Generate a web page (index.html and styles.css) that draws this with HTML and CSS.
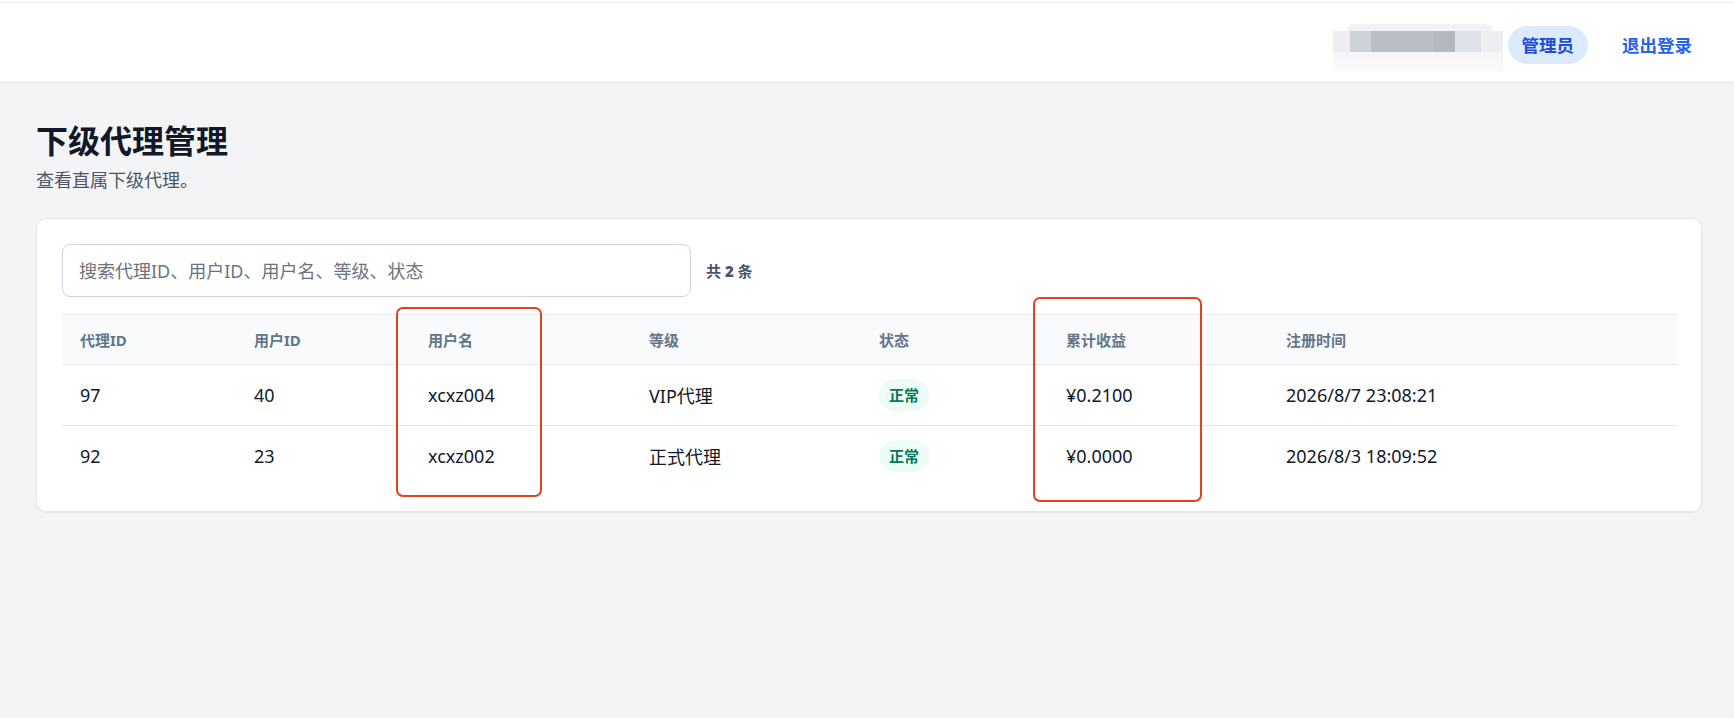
FILE: index.html
```html
<!DOCTYPE html>
<html lang="zh-CN">
<head>
    <meta charset="UTF-8">
    <meta name="viewport" content="width=device-width, initial-scale=1.0">
    <title>下级代理管理</title>
    <link rel="stylesheet" href="styles.css">
</head>
<body>
    <!-- Top bar -->
    <header class="topbar">
        <div class="user-blur">
            <div class="blur-top"></div>
            <div class="blur-mid">
                <span class="b1"></span><span class="b2"></span><span class="b3"></span><span class="b4"></span><span class="b5"></span>
            </div>
            <div class="blur-bottom"></div>
        </div>
        <span class="role-pill">管理员</span>
        <a class="logout" href="#">退出登录</a>
    </header>

    <main class="main">
        <h1 class="page-title">下级代理管理</h1>
        <p class="page-desc">查看直属下级代理。</p>

        <section class="card">
            <div class="toolbar">
                <input class="search" type="text" placeholder="搜索代理ID、用户ID、用户名、等级、状态">
                <span class="count">共 <b>2</b> 条</span>
            </div>

            <table class="agents">
                <colgroup>
                    <col class="c-agent">
                    <col class="c-user">
                    <col class="c-name">
                    <col class="c-level">
                    <col class="c-status">
                    <col class="c-income">
                    <col class="c-time">
                </colgroup>
                <thead>
                    <tr>
                        <th>代理ID</th>
                        <th>用户ID</th>
                        <th>用户名</th>
                        <th>等级</th>
                        <th>状态</th>
                        <th>累计收益</th>
                        <th>注册时间</th>
                    </tr>
                </thead>
                <tbody>
                    <tr>
                        <td>97</td>
                        <td>40</td>
                        <td>xcxz004</td>
                        <td>VIP代理</td>
                        <td><span class="badge">正常</span></td>
                        <td>¥0.2100</td>
                        <td>2026/8/7 23:08:21</td>
                    </tr>
                    <tr>
                        <td>92</td>
                        <td>23</td>
                        <td>xcxz002</td>
                        <td>正式代理</td>
                        <td><span class="badge">正常</span></td>
                        <td>¥0.0000</td>
                        <td>2026/8/3 18:09:52</td>
                    </tr>
                </tbody>
            </table>
        </section>
    </main>

    <!-- annotation marks drawn over the screenshot -->
    <div class="mark mark-name"></div>
    <div class="mark mark-income"></div>
</body>
</html>
```

FILE: styles.css
```css
html {
    background-color: #fff;
}

body {
    margin: 0;
    font-family: "Noto Sans", "Noto Sans CJK SC", sans-serif;
    color: #111827;
    position: relative;
}

/* Top bar */
.topbar {
    margin-top: 2px;
    height: 79px;
    border-top: 1px solid #ececec;
    border-bottom: 1px solid #e5e7eb;
    background-color: #fff;
    display: flex;
    justify-content: flex-end;
    align-items: center;
    padding-right: 30px;
}

.user-blur {
    width: 170px;
    height: 48px;
    margin-top: 10px;
    margin-right: 5px;
    display: flex;
    flex-direction: column;
    filter: blur(0.6px);
}

.blur-top {
    height: 7px;
    margin: 0 10px 0 14px;
    background-color: #f0f2f5;
    border-radius: 8px 8px 0 0;
}

.blur-mid {
    height: 21px;
    display: flex;
    background-color: #eceef2;
}

.blur-mid span {
    display: block;
    height: 100%;
}

.blur-mid .b1 { width: 17px; background-color: #eceef2; }
.blur-mid .b2 { width: 21px; background-color: #cdd1d8; }
.blur-mid .b3 { width: 63px; background-color: #babfc7; }
.blur-mid .b4 { width: 21px; background-color: #b4b8c1; }
.blur-mid .b5 { width: 26px; background-color: #dfe2e8; }

.blur-bottom {
    height: 20px;
    background: linear-gradient(#f4f5f8, #fbfbfc);
}

.role-pill {
    background-color: #dbeafe;
    color: #1d4ed8;
    font-weight: 700;
    font-size: 17.5px;
    line-height: 24px;
    padding: 7px 14px;
    border-radius: 20px;
    margin-top: 4px;
}

.logout {
    color: #2563eb;
    font-weight: 700;
    font-size: 17.5px;
    line-height: 24px;
    padding: 7px 12px;
    margin-left: 22px;
    margin-top: 4px;
    text-decoration: none;
}

/* Main area */
.main {
    background-color: #f3f4f6;
    min-height: calc(100vh - 83px);
    padding: 38px 32px 0 36px;
    box-sizing: border-box;
}

.page-title {
    margin: 0;
    font-size: 32px;
    line-height: 40px;
    font-weight: 700;
    color: #111827;
}

.page-desc {
    margin: 7px 0 0;
    font-size: 18px;
    line-height: 24px;
    color: #4b5563;
}

.card {
    margin-top: 26px;
    background-color: #fff;
    border: 1px solid #e5e7eb;
    border-radius: 10px;
    box-shadow: 0 1px 2px rgba(0, 0, 0, 0.05);
    padding: 25px 24px 25px 25px;
}

.toolbar {
    display: flex;
    align-items: center;
    gap: 15px;
}

.search {
    width: 629px;
    height: 53px;
    box-sizing: border-box;
    border: 1px solid #cbd5e1;
    border-radius: 8px;
    padding: 0 16px;
    font-family: inherit;
    font-size: 18px;
    color: #111827;
    outline: none;
}

.search::placeholder {
    color: #6b7280;
}

.count {
    font-size: 15px;
    font-weight: 700;
    color: #475569;
}

/* Table */
.agents {
    width: 100%;
    margin-top: 17px;
    border-collapse: collapse;
    table-layout: fixed;
}

.c-agent { width: 174px; }
.c-user { width: 174px; }
.c-name { width: 221px; }
.c-level { width: 230px; }
.c-status { width: 187px; }
.c-income { width: 220px; }

.agents th {
    background-color: #f8fafc;
    border-top: 1px solid #e5e7eb;
    border-bottom: 1px solid #e5e7eb;
    height: 49px;
    padding: 0 18px;
    text-align: left;
    font-size: 15px;
    font-weight: 700;
    color: #64748b;
}

.agents td {
    height: 60px;
    padding: 0 18px;
    font-size: 18px;
    color: #111827;
}

.agents tbody tr + tr td {
    border-top: 1px solid #e5e7eb;
}

.badge {
    display: inline-block;
    background-color: #ecfdf5;
    color: #047857;
    font-size: 15px;
    font-weight: 700;
    line-height: 20px;
    padding: 6px 10px;
    border-radius: 16px;
}

/* Red annotation boxes */
.mark {
    position: absolute;
    border: 2.5px solid #e0431f;
    border-radius: 7px;
    box-sizing: border-box;
}

.mark-name {
    left: 396px;
    top: 307px;
    width: 146px;
    height: 190px;
}

.mark-income {
    left: 1033px;
    top: 297px;
    width: 169px;
    height: 205px;
}
```
